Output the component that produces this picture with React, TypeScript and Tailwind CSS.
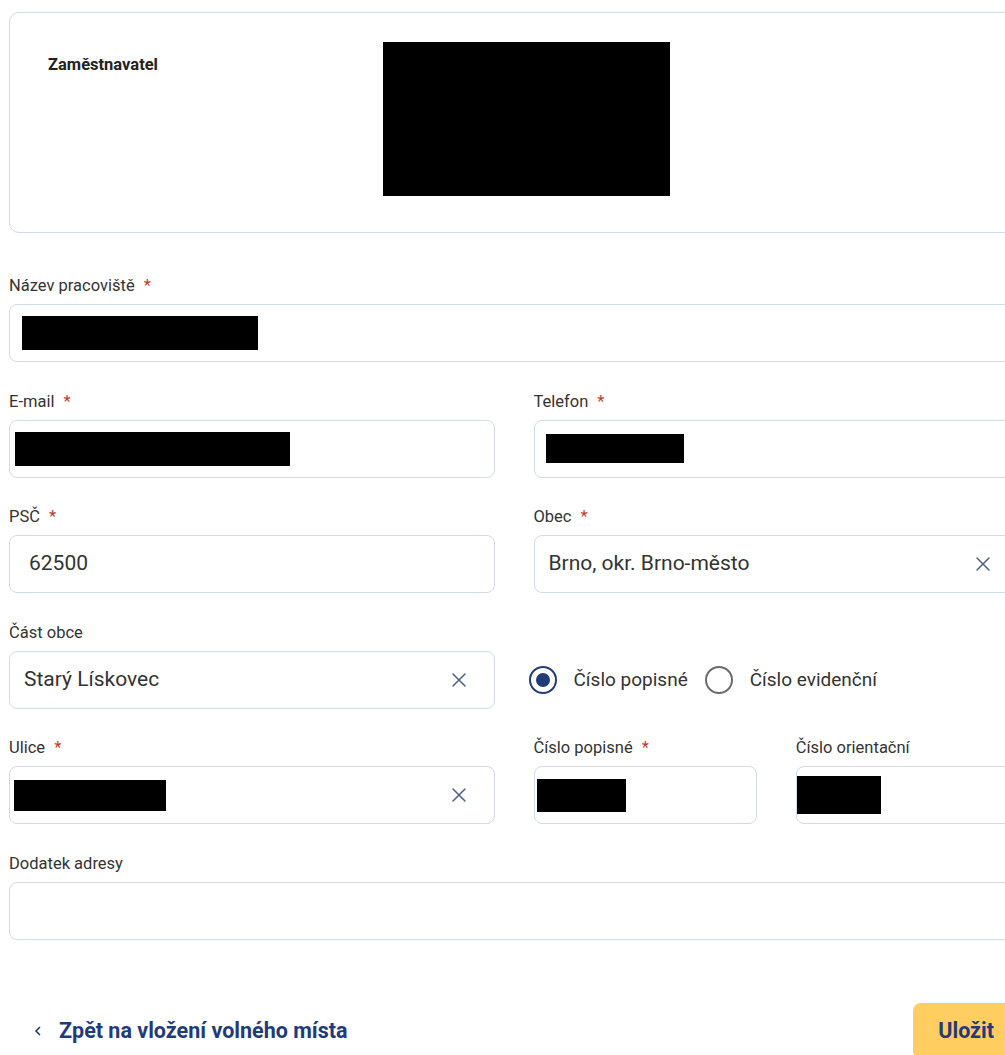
import React from 'react'

const font = { fontFamily: 'Roboto, "Noto Sans", sans-serif' }

function Label({ text, required }: { text: string; required?: boolean }) {
  return (
    <div className="mb-[8px] flex h-[20px] items-center text-[16.5px] leading-[20px] text-[#333]">
      <span>{text}</span>
      {required && <span className="ml-[9px] text-[#c0392b]">*</span>}
    </div>
  )
}

function Redacted({ w, h = 34 }: { w: number; h?: number }) {
  return <div className="bg-black" style={{ width: w, height: h }} />
}

function ClearIcon() {
  return (
    <svg width="16" height="16" viewBox="0 0 16 16" className="shrink-0">
      <path d="M2 2 L14 14 M14 2 L2 14" stroke="#4c5f8a" strokeWidth="1.5" strokeLinecap="round" />
    </svg>
  )
}

function Input({
  children,
  clearable,
  pad = 'pl-[14px]',
}: {
  children?: React.ReactNode
  clearable?: boolean
  pad?: string
}) {
  return (
    <div
      className={`flex h-[58px] items-center rounded-[8px] border border-[#d3d9e6] bg-white ${pad} pr-[27px]`}
    >
      <div className="flex-1 text-[21px] text-[#333]">{children}</div>
      {clearable && <ClearIcon />}
    </div>
  )
}

function Radio({ label, checked }: { label: string; checked?: boolean }) {
  return (
    <label className="flex items-center gap-[17px]">
      <span
        className={`flex h-[28px] w-[28px] items-center justify-center rounded-full border-2 ${
          checked ? 'border-[#223c7a]' : 'border-[#6b6b6b]'
        }`}
      >
        {checked && <span className="h-[14px] w-[14px] rounded-full bg-[#223c7a]" />}
      </span>
      <span className="text-[19px] text-[#333]">{label}</span>
    </label>
  )
}

export default function App() {
  return (
    <div className="h-[1055px] w-[1005px] overflow-hidden bg-white" style={font}>
      <div className="w-[1019px] pl-[9px] pt-[12px]">
        {/* employer card */}
        <div className="flex h-[221px] rounded-[10px] border border-[#d3d9e6]">
          <div className="w-[373px] pl-[38px] pt-[40px] text-[16.5px] font-bold text-[#222]">
            Zaměstnavatel
          </div>
          <div className="pt-[29px]">
            <Redacted w={287} h={154} />
          </div>
        </div>

        <div className="mt-[43px]">
          <Label text="Název pracoviště" required />
          <Input pad="pl-[12px]">
            <Redacted w={236} />
          </Input>
        </div>

        <div className="mt-[29.6px] grid grid-cols-2 gap-x-[39px] gap-y-[29.6px]">
          <div>
            <Label text="E-mail" required />
            <Input pad="pl-[5px]">
              <Redacted w={275} />
            </Input>
          </div>
          <div>
            <Label text="Telefon" required />
            <Input pad="pl-[11px]">
              <Redacted w={138} h={29} />
            </Input>
          </div>

          <div>
            <Label text="PSČ" required />
            <Input pad="pl-[19px]">62500</Input>
          </div>
          <div>
            <Label text="Obec" required />
            <Input clearable>Brno, okr. Brno-město</Input>
          </div>

          <div>
            <Label text="Část obce" />
            <Input clearable>Starý Lískovec</Input>
          </div>
          <div className="flex items-end">
            <div className="-ml-[5px] flex h-[58px] items-center gap-[17px]">
              <Radio label="Číslo popisné" checked />
              <Radio label="Číslo evidenční" />
            </div>
          </div>

          <div>
            <Label text="Ulice" required />
            <Input clearable pad="pl-[4px]">
              <Redacted w={152} h={31} />
            </Input>
          </div>
          <div className="grid grid-cols-2 gap-x-[39px]">
            <div>
              <Label text="Číslo popisné" required />
              <Input pad="pl-[2px]">
                <Redacted w={89} h={33} />
              </Input>
            </div>
            <div>
              <Label text="Číslo orientační" />
              <Input pad="pl-[0px]">
                <Redacted w={84} h={38} />
              </Input>
            </div>
          </div>
        </div>

        <div className="mt-[29.6px]">
          <Label text="Dodatek adresy" />
          <Input />
        </div>

        {/* footer actions */}
        <div className="mt-[63px] flex items-center justify-between">
          <a className="flex items-center gap-[16px] pl-[24px] text-[21.5px] font-bold text-[#1f3b7b]">
            <svg width="10" height="14" viewBox="0 0 10 14">
              <path d="M7 3 L3 7 L7 11" stroke="#1f3b7b" strokeWidth="1.6" fill="none" />
            </svg>
            Zpět na vložení volného místa
          </a>
          <button className="mr-[0px] h-[56px] rounded-[8px] bg-[#ffcd60] px-[25px] text-[21.5px] font-bold text-[#1f3b7b]">
            Uložit
          </button>
        </div>
      </div>
    </div>
  )
}
